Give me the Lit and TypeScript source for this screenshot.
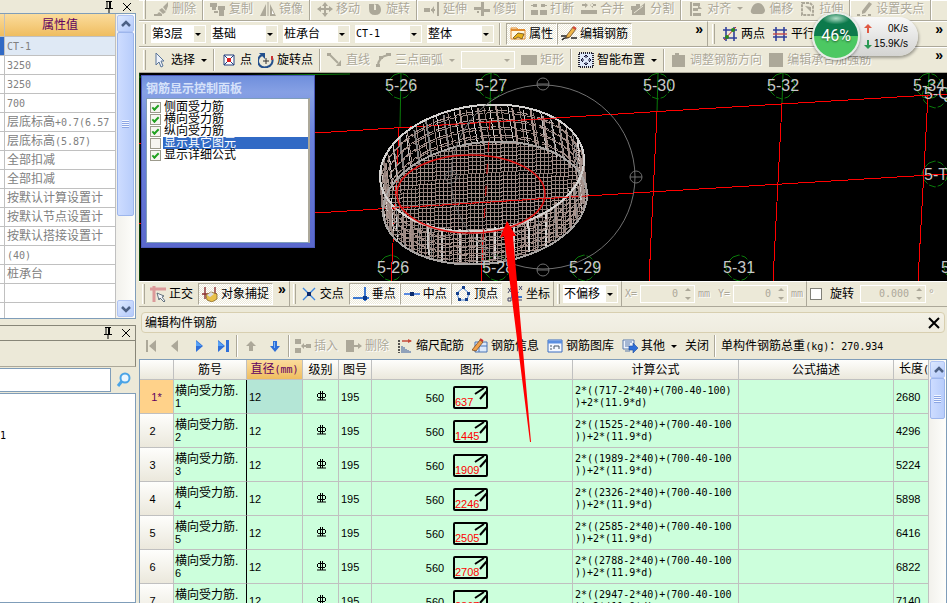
import { LitElement, html, svg, css, nothing } from "lit";
import { customElement } from "lit/decorators.js";
import { classMap } from "lit/directives/class-map.js";

const D = "#aca899";
const B = "#2f6fd8";

/* Icon artwork, each on a 16 x 16 grid. */
const icons: Record<string, unknown> = {
  erase: svg`<path d="M1 15q3-1 5-4l3 2q-3 2-8 2z M6 9l4 4 3-2-4-4z M10 6l5-5v4l-2 5z" fill=${D}/><path d="M1 14h8" stroke=${D} stroke-width="2"/>`,
  copy: svg`<path d="M0 2h7v4H0z M2 6h4v3H2z M8 5h7v4H8z M9 9h5v6H9z M4 10h4v2H4z" fill=${D}/>`,
  mirror: svg`<path d="M6 3v12H0z M10 3v12h6z" fill=${D}/><path d="M12 9v4h2z" fill="#fff"/><path d="M8 1v14" stroke=${D}/>`,
  move: svg`<path d="M8 1l3 4H9v2h3V5l4 3-4 3V9H9v3h2l-3 4-3-4h2V9H4v2L0 8l4-3v2h3V5H5z" fill=${D}/>`,
  rot: svg`<path d="M2 3h5v6h2V4L7 3h4q3 2 3 6 0 5-6 5-6 0-6-6z" fill=${D}/>`,
  extend: svg`<path d="M0 7h6v4H0z M7 8h4v2H7z M10 5v8l-3-4z M13 1h2v14h-2z" fill=${D}/>`,
  trim: svg`<path d="M7 1h3v14H7z M0 6h7v3H0z M10 8h6v3h-6z M3 10h2v2H3z" fill=${D}/>`,
  brk: svg`<path d="M0 9h7v5H0z M9 9h7v5H9z M2 3h4v3H2z M10 3h4v3h-4z M0 4h2v1H0z M14 4h2v1h-2z" fill=${D}/>`,
  merge: svg`<path d="M0 9h16v4H0z M1 3h5v2H1z M10 3h5v2h-5z M4 2l3 2-3 3z M12 2L9 4l3 3z" fill=${D}/>`,
  split: svg`<path d="M0 5h5V3h4v3l5-4v12H1V9H0z" fill=${D}/><path d="M3 12l9-7" stroke="#ece9d8"/>`,
  align: svg`<path d="M2 1h2v14H2z M5 2h7v3H5z M5 7h5v3H5z M5 12h8v3H5z M10 4l4 4h-4z" fill=${D}/>`,
  offset: svg`<path d="M1 9q2-7 7-7t7 7q0 3-3 4H3Q0 12 1 9z" fill=${D}/>`,
  stretch: svg`<path d="M2 2h8l3 3v9H2z" fill="none" stroke=${D} stroke-width="2" stroke-dasharray="3 1"/><path d="M5 5l6 6V6z" fill=${D}/>`,
  grips: svg`<path d="M5 10l7-9 3 2-7 9-3 1z M0 13h3v2H0z M5 14h4v1H5z M11 13h3v2h-3z" fill=${D}/>`,
  props: svg`<path d="M1 2h6l1 2h7v9H1z" fill="#fff7e0" stroke="#e08a2c"/><path d="M1 4h14" stroke="#e08a2c" stroke-width="2"/><path d="M3 12l5-5 6 1-2 5-4-2-3 2z" fill="#e8b21c" stroke="#6b4a12" stroke-width=".8"/>`,
  editbar: svg`<path d="M0 10h6M10 12h6M1 14c3-4 5-1 7-3" fill="none" stroke="#222" stroke-width="1.400"/><path d="M5 12l1-3 6-8 3 2-6 8z" fill="#f0b648" stroke="#6a4a28" stroke-width=".8"/><path d="M12 1l3 2" stroke="#d24a3a" stroke-width="2.400"/>`,
  twopt: svg`<path d="M4 1v14M12 1v14M1 4h14M1 12h14" stroke="#31409c" stroke-width="1.600"/><path d="M2 14L14 1" stroke="#c22"/><circle cx="5" cy="11" r="2" fill="#2a8a1c"/><circle cx="11" cy="4" r="2" fill="#2a8a1c"/>`,
  par: svg`<path d="M4 1v14M12 1v14M1 4h14M1 11h14" stroke="#31409c" stroke-width="1.600"/><path d="M1 8h14" stroke="#c44a4a" stroke-width="1.400"/>`,
  pick: svg`<path d="M4 1l8 8H9l2 5-2 1-2-5-3 3z" fill="#eef3fb" stroke="#5a7598"/>`,
  point: svg`<path d="M3 3h10v10H3z" fill="#fff" stroke="#24407e"/><path d="M3 3l10 10M13 3L3 13" stroke="#24407e"/><path d="M6 6h4v4H6z" fill="#d22"/>`,
  rotpt: svg`<path d="M4 3a6.500 6.500 0 0 0 5 12M9 15a6.500 6.500 0 0 0 5-9" fill="none" stroke="#23508c" stroke-width="2"/><path d="M1 1h6v6z" fill="#23508c"/><path d="M14 4v4" stroke="#c33" stroke-width="2"/><path d="M8 6v6M5 9h6" stroke="#333"/>`,
  line: svg`<path d="M2 2l9 9" stroke=${D} stroke-width="2"/><path d="M0 1h4v3H0z M9 14h5V8z" fill=${D}/>`,
  arc: svg`<path d="M2 14q0-9 10-11" fill="none" stroke=${D} stroke-width="2"/><path d="M0 12h4v3H0z M10 1h5v3h-5z M3 4h4v3H3z" fill=${D}/>`,
  rect: svg`<path d="M0 3h16v10H0z" fill=${D}/>`,
  smart: svg`<path d="M1 1h14v14H1z" fill="#dfe9fb" stroke="#223" stroke-width="2" stroke-dasharray="1 1"/><path d="M8 3v3M8 10v3M3 8h3M10 8h3M6 5l2-2 2 2M6 11l2 2 2-2M5 6L3 8l2 2M11 6l2 2-2 2" fill="none" stroke="#113"/>`,
  blk: svg`<path d="M1 3h3V1h4v2h6v12H1z" fill=${D}/>`,
  blk2: svg`<path d="M1 1h14v14H1z" fill=${D}/>`,
  ortho: svg`<path d="M0 3h16M4 0v16" stroke="#dc9a9a" stroke-width="3"/><path d="M7 7l7 3-2 1 3 4-1 1-4-4-1 2z" fill="#f4f6fa" stroke="#456" stroke-width=".8"/>`,
  snap: svg`<path d="M0 8h15M3 1v12M13 1v12" stroke="#8c3030" stroke-width="1.400"/><path d="M4 9l5-3 6 2v5l-5 3-5-2z" fill="#e8c04a" stroke="#86672a" stroke-width=".8"/><path d="M5 9l4-3 3 2-4 3z" fill="#d8dce4"/>`,
  inter: svg`<path d="M2 2l12 12M14 2L2 14" stroke="#3c86e0" stroke-width="1.400"/><path d="M6 6h4v4H6z" fill="#0a2a6c"/>`,
  perp: svg`<path d="M0 12h16M12 1v14" stroke="#3c78d0" stroke-width="2"/><path d="M10 10h4v4h-4z" fill="#0a3a8c"/>`,
  mid: svg`<path d="M0 8h16" stroke="#5a8ae0" stroke-width="2"/><path d="M6 6h4v4H6z" fill="#0a2a6c"/>`,
  vert: svg`<path d="M8 2l6 5-2 7H4L2 7z" fill="none" stroke="#4a86dc"/><path d="M7 0h3v3H7z M1 6h3v3H1z M12 6h3v3h-3z M3 12h3v3H3z M10 12h3v3h-3z" fill="#14408c"/>`,
  coord: svg`<path d="M5 5v6h10" fill="none" stroke="#3c78d0" stroke-width="2"/><path d="M6 10l6-4" stroke="#3c78d0"/><path d="M1 2l3 4M4 2L1 7M12 0l3 4M15 0l-3 4M1 12h3v3H1z M9 14h6" fill="none" stroke="#446"/>`,
  first: svg`<path d="M3 2h2v12H3z M13 2v12L6 8z" fill=${D}/>`,
  prev: svg`<path d="M11 2v12L4 8z" fill=${D}/>`,
  next: svg`<path d="M5 2v12l7-6z" fill=${B}/><path d="M5 3v5h6z" fill="#58a2f6"/>`,
  last: svg`<path d="M3 2v12l7-6z M11 2h3v12h-3z" fill=${B}/><path d="M3 3v5h6z" fill="#58a2f6"/>`,
  up: svg`<path d="M8 3l5 5h-3v5H6V8H3z" fill=${D}/>`,
  down: svg`<path d="M6 3h4v5h3l-5 6-5-6h3z" fill=${B}/><path d="M7 4h1v6H7z" fill="#7cb8fa"/>`,
  ins: svg`<path d="M0 1h6v5H0z M0 10h6v5H0z M11 6h5v4h-5z M8 7h3v2H8z M9 5v6L6 8z" fill=${D}/>`,
  del: svg`<path d="M0 2h8v12H0z M8 7h4v2H8z M12 5l4 3-4 3z" fill=${D}/>`,
  scale: svg`<path d="M2 2v13" stroke="#222" stroke-width="1.500" stroke-dasharray="2 1"/><path d="M5 3h9" stroke="#c64a3a" stroke-width="1.500"/><path d="M11 1l4 2-4 2z" fill="#c64a3a"/><path d="M5 8v7M7 9v6M9 11v4M11 12v3M13 13v2" stroke="#345a9c"/>`,
  info: svg`<path d="M3 4h12v10H3z" fill="#dce9fb" stroke="#4a74b4"/><path d="M7 14V8h8" fill="none" stroke="#4a74b4"/><path d="M0 12l8-10 3 2-7 9z" fill="#f0a04a" stroke="#7a4a20" stroke-width=".8"/><path d="M8 1l3 2" stroke="#c33" stroke-width="2"/>`,
  lib: svg`<path d="M1 2h14v12H1z" fill="#f4f8ff" stroke="#3a6cc0"/><path d="M1 4h14" stroke="#5a8ee0" stroke-width="3"/><path d="M3 8h2M3 11h2M7 11V8h5v3" fill="none" stroke="#456"/>`,
  other: svg`<path d="M1 2h11v9H1z" fill="#eef3fb" stroke="#5a7aac"/><path d="M3 4h7M3 6h5M3 8h4M3 13h5" stroke="#5a7aac"/><path d="M7 8h4V5l5 5-5 5v-3H7z" fill=${B} stroke="#1c4a9c" stroke-width=".6"/>`,
  search: svg`<circle cx="9" cy="6" r="4.500" fill="#eaf6ff" stroke="#4aa4e6" stroke-width="2"/><path d="M6 9l-4 5" stroke="#4aa4e6" stroke-width="3"/>`,
  pin: svg`<path d="M5 2.500h6M6 2v7M9.500 2v7M8.500 2v7M4 9.500h8M8 10v4" stroke="#000" fill="none"/>`,
  x: svg`<path d="M4 4l8 8M12 4l-8 8" stroke="#000"/>`,
  bigx: svg`<path d="M3 3l10 10M13 3L3 13" stroke="#000" stroke-width="2"/>`,
  cup: svg`<path d="M4 10l4-4 4 4" fill="none" stroke="#4d6185" stroke-width="2.500"/>`,
  cdn: svg`<path d="M4 6l4 4 4-4" fill="none" stroke="#4d6185" stroke-width="2.500"/>`,
};

const icon = (n: string) => svg`<svg class="ico" width="16" height="16" viewBox="0 0 16 16" aria-hidden="true">${icons[n]}</svg>`;

/* Half-width runs are set in the fixed-pitch face beside 12px Han text. */
const mix = (s: string) =>
  s.split(/([\x20-\x7e]+)/).filter(Boolean).map((p) => (/^[\x20-\x7e]/.test(p) ? html`<span class="m">${p}</span>` : p));

interface Opt { off?: boolean; on?: boolean; drop?: boolean }
const tool = (ic: string, label: string, o: Opt = {}) => html`<button
  class=${classMap({ tool: true, on: !!o.on })} ?disabled=${!!o.off}
  aria-pressed=${o.on ? "true" : nothing}>${ic ? icon(ic) : nothing}<span>${label}</span>${o.drop ? html`<i class="caret"></i>` : nothing}</button>`;
const iconBtn = (ic: string, label: string, off = false) =>
  html`<button class="tool" aria-label=${label} ?disabled=${off}>${icon(ic)}</button>`;
const sep = html`<i class="sep"></i>`;
const grip = html`<i class="grip"></i>`;
const more = html`<button class="more" aria-label="更多">»</button>`;
const combo = (v: string, label: string, extra = "") =>
  html`<span class="combo ${extra}"><select aria-label=${label} ?disabled=${!v}><option>${v}</option></select><i class="caret"></i></span>`;
const spin = (id: string, v: string) =>
  html`<span class="spin"><input id=${id} type="text" value=${v} disabled /><i class="ud"></i></span>`;

const shared = css`
  button { font: inherit; color: inherit; border: 0; background: none; padding: 0; margin: 0; }
  .ico { display: block; flex: none; }
  .m { font-family: "DejaVu Sans Mono", monospace; font-size: 10px; }
`;

@customElement("cad-viewport")
export class CadViewport extends LitElement {
  static styles = [shared, css`
    :host { display: block; position: relative; height: 208px; background: #000; overflow: hidden; font: 12px/12px "Liberation Sans", "Noto Sans CJK SC", sans-serif; }
    .scene { display: block; width: 100%; height: 208px; }
    .tag { font: 16px "Liberation Sans", sans-serif; fill: #c8c8c8; }
    .palette { position: absolute; left: 2px; top: 2px; width: 174px; height: 173px; box-sizing: border-box; padding: 4px; display: flex; flex-direction: column;
      background: linear-gradient(#6f8fdc, #86a0e4 16px, #6b82dc 60px, #5a68cc); border: 1px solid #4a58b8; }
    h2 { margin: 0; padding: 0; font: bold 12px/18px "Liberation Sans", "Noto Sans CJK SC", sans-serif; color: #d6e2fa; }
    ul { flex: 1; margin: 0; padding: 2px 0 2px 3px; list-style: none; background: #fff; border: 1px solid #7f9db9; border-right: 2px solid #aca899; }
    li { display: flex; align-items: center; height: 12px; gap: 2px; }
    li input { appearance: none; flex: none; width: 11px; height: 11px; margin: 0; border: 1px solid #9c9a8c; background: #f6f5f0; display: grid; place-items: center; }
    li input:checked::before { content: ""; width: 5px; height: 2px; border-left: 2px solid #21a121; border-bottom: 2px solid #21a121; transform: rotate(-45deg); }
    li label { flex: 1; padding-left: 1px; color: #000; white-space: nowrap; }
    li.sel label { background: #316ac5; color: #fff; }
  `];

  private rods() {
    const out: unknown[] = [];
    const tones = ["#a8948e", "#d8d4d2", "#9a8882", "#808080", "#a8948e", "#c8c4c2", "#8c7c77"];
    const top = (t: number, k = 1) => [482 + 102 * k * Math.cos(t), 168 - 8 * k * Math.cos(t) + 63 * k * Math.sin(t)];
    const bot = (t: number, k = 1) => [485 + 102 * k * Math.cos(t), 203 - 8 * k * Math.cos(t) + 61 * k * Math.sin(t)];
    const n = 105;
    for (let i = 0; i < n; i++) {
      const t = (i / n) * Math.PI * 2;
      const k = i % 2 ? 1 : 0.96;
      const [a, b] = top(t, k);
      const [c, d] = bot(t + 0.03, k);
      out.push(svg`<path d="M${a} ${b}L${c} ${d}" stroke=${tones[(i * 5 + (i % 4)) % 7]} stroke-width=${i % 3 === 0 ? 2 : 1}/>`);
    }
    const ring = (h: number, k: number) => {
      let p = "";
      for (let i = 0; i <= 72; i++) {
        const t = (i / 72) * Math.PI * 2;
        const [a, b] = top(t, k);
        const [c, d] = bot(t, k);
        p += `${i ? "L" : "M"}${a + (c - a) * h} ${b + (d - b) * h}`;
      }
      return p;
    };
    for (let j = 1; j < 9; j++) out.push(svg`<path d=${ring(j / 9, j % 2 ? 0.97 : 1)} stroke=${j % 2 ? "#a8948e" : "#9a8680"} stroke-dasharray=${j % 2 ? "11 2 5 3" : "7 3 14 2"}/>`);
    out.push(svg`<path d=${ring(1, 1)} stroke="#a8a4a2" stroke-width="2"/><path d=${ring(0, 1)} stroke="#d4d2d0" stroke-width="2"/>`);
    return out;
  }

  private mesh() {
    const out: unknown[] = [];
    for (let x = -102, i = 0; x <= 102; x += 4, i++) {
      const h = 60 * Math.sqrt(Math.max(0, 1 - (x / 102) ** 2));
      const cy = 203 - x * 0.08;
      out.push(svg`<path d="M${487 + x} ${cy - h}L${483 + x} ${cy + h}" stroke=${i % 3 ? "#93817c" : "#a8948e"}/>`);
    }
    for (let y = -58, i = 0; y <= 58; y += 4, i++) {
      const w = 101 * Math.sqrt(1 - (y / 61) ** 2);
      out.push(svg`<path d="M${485 - w} ${203 + y + w * 0.06}L${485 + w} ${203 + y - w * 0.06}" stroke=${i % 3 ? "#93817c" : "#a8948e"}/>`);
    }
    return out;
  }

  render() {
    const bubbles = [[400, 86], [491, 86], [658, 86], [782, 86], [929, 86], [935, 95], [935, 174], [391, 268], [497, 268], [584, 268], [739, 268], [957, 268]];
    const tags: [string, number, number][] = [["5-26", 385, 91], ["5-27", 475, 91], ["5-30", 643, 91], ["5-32", 767, 91], ["5-34", 913, 91], ["5-Q", 924, 99], ["5-T", 924, 180], ["5-26", 377, 273], ["5-28", 482, 273], ["5-29", 569, 273], ["5-31", 723, 273], ["5-33", 941, 273]];
    const items: [string, boolean][] = [["侧面受力筋", true], ["横向受力筋", true], ["纵向受力筋", true], ["显示其它图元", false], ["显示详细公式", true]];
    return html`
      <svg class="scene" role="img" aria-label="桩承台三维视图">
        <g transform="translate(-139 -73)" fill="none">
          <g stroke="#0a7a0a">
            <path d="M139 77L350 74M401 73L400 128M491 73L490 108M658 73L657 112M783 73L782 103M929 73L928 95M139 73v208"/>
            ${bubbles.map(([x, y]) => svg`<path d="M${x - 6} ${y - 11}l6-2 6 2 5 5 2 6-2 6-5 5-6 2-6-2-5-5-2-6 2-6z" stroke-dasharray="7 2"/>`)}
          </g>
          <g stroke="#f00" shape-rendering="crispEdges">
            <path d="M139 144L650 112L947 94M139 224L650 192L947 174"/>
            <path d="M399 128L391 281M657 112L649 281M782 103L773 281M928 95L918 281M483 240L481 281"/>
          </g>
          <g shape-rendering="crispEdges">${this.mesh()}</g>
          <g shape-rendering="crispEdges">${this.rods()}</g>
          <g stroke="#707070"><circle cx="543" cy="177" r="92"/><circle cx="543" cy="84" r="6"/><circle cx="636" cy="177" r="6"/><circle cx="543" cy="270" r="6"/><circle cx="451" cy="177" r="6"/><path d="M537 84h12M630 177h12M537 270h12"/></g>
          <g stroke="#e01010">
            <ellipse cx="471" cy="194" rx="74" ry="39" stroke-width="1.500"/>
            <path d="M392 208L588 196M440 125L560 118" stroke-dasharray="7 3"/>
            <path d="M398 150L396 172M490 120L483 240" stroke-dasharray="10 12"/>
          </g>
          ${tags.map(([s, x, y]) => svg`<text class="tag" x=${x} y=${y}>${s}</text>`)}
        </g>
      </svg>
      <section class="palette">
        <h2>钢筋显示控制面板</h2>
        <ul>${items.map(([s, c], i) => html`<li class=${c ? "" : "sel"}><input type="checkbox" id="show${i}" .checked=${c} /><label for="show${i}">${s}</label></li>`)}</ul>
      </section>`;
  }
}

@customElement("app-root")
export class AppRoot extends LitElement {
  static styles = [shared, css`
    :host { display: grid; grid-template-columns: 139px minmax(0, 1fr); height: 100vh; overflow: hidden; position: relative; background: #ece9d8; color: #000;
      font: 12px/14px "Liberation Sans", "Noto Sans CJK SC", sans-serif; }
    * { box-sizing: border-box; }
    i { display: block; font-style: normal; }

    .side { display: grid; grid-template-rows: 13px 306px 6px 16px 26px 26px minmax(0, 1fr); margin-right: 3px; min-height: 0; }
    .cap { display: flex; justify-content: flex-end; align-items: center; gap: 2px; padding-right: 1px; overflow: hidden; }
    .cap.low { border: 1px solid #888678; border-left: 0; }
    .props { display: grid; grid-template-columns: minmax(0, 1fr) 19px; background: #fff; border: 1px solid #7f9db9; border-left: 0; overflow: hidden; }
    .props table { width: 100%; height: 0; border-collapse: separate; border-spacing: 0; table-layout: fixed; }
    .props th { height: 23px; padding: 0; font-weight: normal; color: #600060; background: linear-gradient(#fbdc9c, #efbd60); border-right: 1px solid #c0c0c0; border-bottom: 1px solid #c0c0c0; }
    .props td { height: 19px; padding: 0 0 0 2px; color: #808080; border-right: 1px solid #c0c0c0; border-bottom: 1px solid #c0c0c0; white-space: nowrap; overflow: hidden; }
    .props .edge { width: 5px; padding: 0; background: #fff; }
    .props tr.cur td { background: #dfe9f5; }
    .props tr.cur .edge { background: #316ac5; }
    .sb { display: flex; flex-direction: column; background: linear-gradient(90deg, #f2f1ec, #fefefb); padding: 1px; overflow: hidden; }
    .sb button { flex: none; width: 100%; height: 17px; display: grid; place-items: center; border-radius: 2px; border: 1px solid #b0c4f4; background: linear-gradient(135deg, #dce8ff, #b4cafa); overflow: hidden; }
    .thumb { flex: none; height: 184px; border-radius: 2px; border: 1px solid #9db6ec; background: linear-gradient(90deg, #cddcff, #b8cdfb); display: grid; place-items: center; }
    .thumb::before { content: ""; width: 7px; height: 8px; background: repeating-linear-gradient(#f2f6ff 0 1px, #8ca6e4 1px 2px); }
    .sb .end { margin-top: auto; }
    .thumb.short { height: 41px; }
    .find { display: grid; grid-template-columns: minmax(0, 1fr) 25px; padding: 1px 0; }
    .find input { min-width: 0; margin: 0; border: 1px solid #7f9db9; border-left: 0; background: #fff; }
    .find button { display: grid; place-items: center; }
    .strip { border-right: 1px solid #888678; border-bottom: 1px solid #aca899; }
    .tree { background: #fff; border: 1px solid #7f9db9; border-left: 0; padding-top: 34px; overflow: hidden; }

    .main { display: flex; flex-direction: column; min-width: 0; min-height: 0; }
    .row { flex: none; display: flex; height: 26px; border-bottom: 1px solid #aca899; white-space: nowrap; overflow: hidden; }
    .row.top { height: 21px; padding-bottom: 4px; }
    .top .sep { margin: 0 -1px; }
    .band { flex: none; display: flex; align-items: center; gap: 7px; padding: 0 4px; border-top: 1px solid #fff; }
    .band + .band { border-left: 1px solid #aca899; }
    .band.grow { flex: 1; min-width: 0; }
    .band.two { width: 240px; }
    .band.draw { gap: 6px; }
    .snug { gap: 5px; }
    .stat .band { padding: 0 3px; }
    .tool { flex: none; display: flex; align-items: center; gap: 3px; height: 20px; }
    .tool:disabled { color: #aca899; text-shadow: 1px 1px #fff; }
    .tool.on { height: 22px; padding: 0 3px; border: 1px solid #aca899; border-right-color: #fff; border-bottom-color: #fff; background: repeating-conic-gradient(#fff 0 25%, #ece9d8 0 50%) 0 0 / 2px 2px; }
    .on + .on { margin-left: -5px; }
    .grip { flex: none; width: 3px; height: 20px; border-left: 1px solid #fff; border-right: 1px solid #aca899; }
    .sep { flex: none; width: 2px; height: 22px; border-left: 1px solid #aca899; border-right: 1px solid #fff; }
    .caret { flex: none; width: 0; height: 0; border: 3px solid transparent; border-top-color: currentColor; border-bottom: 0; margin-left: 3px; }
    .more { margin-left: auto; align-self: flex-start; font: bold 14px/14px "Liberation Sans", sans-serif; }
    .combo { flex: none; display: grid; grid-template-columns: minmax(0, 1fr) 10px; align-items: center; width: 67px; height: 18px; background: linear-gradient(90deg, #fff calc(100% - 11px), #ece9d8 0); border: 1px solid #fff; }
    .combo.thin { width: 55px; }
    .combo.dis { background: none; width: 54px; color: #aca899; }
    .combo .caret { margin: 0; }
    select { appearance: none; width: 100%; height: 16px; margin: 0; padding: 0; border: 0; background: none; font: 12px/16px "Liberation Sans", "Noto Sans CJK SC", sans-serif; color: #000; }
    .code select { font: 10px/16px "DejaVu Sans Mono", monospace; }
    .spin { flex: none; display: flex; align-items: center; width: 55px; height: 18px; border: 1px solid #fff; padding-right: 3px; }
    .rotate .spin { width: 66px; margin-left: 3px; }
    .spin input { flex: 1; min-width: 0; width: 100%; margin: 0; border: 0; padding: 0 7px 0 0; background: none; text-align: right; color: #aca899; font: 10px/16px "DejaVu Sans Mono", monospace; }
    .ud { flex: none; width: 6px; height: 12px; background: linear-gradient(#aca899 3px, #ece9d8 3px 9px, #aca899 9px); clip-path: polygon(50% 0, 100% 3px, 100% 9px, 50% 100%, 0 9px, 0 3px); }
    .dim { color: #aca899; text-shadow: 1px 1px #fff; }
    .fields { gap: 3px; }
    .fields .pad { margin-left: 5px; }
    .tick { appearance: none; flex: none; width: 12px; height: 12px; margin: 0 5px 0 0; border: 1px solid #808078; background: #fff; }

    .title { flex: none; display: flex; align-items: center; justify-content: space-between; height: 21px; margin: 5px 2px 0; padding: 0 2px 0 3px; background: linear-gradient(#f3f1e7, #efecdf); border: 1px solid #d8cfb0; border-radius: 4px; }
    h1 { margin: 0; font: inherit; }
    .edit { height: 26px; border: 0; }
    .edit .band { border: 0; }
    .nav { gap: 8px; }
    .nav .sep { margin: 0 -3px; }

    .grid { flex: 1; min-height: 0; display: grid; grid-template-columns: minmax(0, 1fr) 17px; border: 1px solid #7f9db9; border-bottom: 0; background: #fff; overflow: hidden; }
    .clip { overflow: hidden; }
    .grid table { width: 100%; border-collapse: separate; border-spacing: 0; table-layout: fixed; }
    .grid th { height: 20px; padding: 0; font-weight: normal; white-space: nowrap; overflow: hidden; background: linear-gradient(#fefefc, #ebe8dc); border-right: 1px solid #c0c0c0; border-bottom: 1px solid #c0c0c0; }
    .grid th.hot { background: linear-gradient(#fbdc9c, #efbd60); color: #600060; }
    .grid td { height: 34px; padding: 0 2px; line-height: 12px; background: #ccffdc; border-right: 1px solid #c0c0c0; border-bottom: 1px solid #c0c0c0; overflow: hidden; }
    .grid tbody th { background: linear-gradient(#fefefc, #ebe8dc); height: 34px; padding: 0 8px 0 0; }
    .grid tbody tr.cur th { background: #ffd28a; color: #600060; padding: 0; }
    .grid tr.cur td.dia { background: #b4e6d6; }
    .grid td.name { padding: 0 0 0 1px; border-right-color: #000; }
    .grid thead th:last-child { text-align: left; padding-left: 5px; }
    .n { font: 11px/12px "Liberation Sans", sans-serif; }
    .mid { text-align: center; }
    .shape { display: flex; justify-content: center; align-items: center; gap: 9px; padding: 2px 29px 0 0; }
    .fig { display: block; }
    .fig text { font: 11px "Liberation Sans", sans-serif; fill: #f00; }
    .c0 { width: 34px; } .c1 { width: 73px; } .c2 { width: 56px; } .c3 { width: 36px; } .c4 { width: 33px; } .c5 { width: 201px; } .c6 { width: 166px; } .c8 { width: 35px; }

    .arrow { position: absolute; left: 0; top: 0; width: 100%; height: 100%; pointer-events: none; }
    .net { position: absolute; left: 812px; top: 12px; display: flex; align-items: center; }
    .ball { width: 48px; height: 48px; border-radius: 50%; border: 2px solid #e8ece8; box-shadow: 0 1px 3px #0006; background: radial-gradient(ellipse 14px 6px at 50% 10%, #d8f4e4cc, transparent), linear-gradient(#0c7a4c 50%, #4cc862 50%); color: #fff; font: 16px/44px Roboto, sans-serif; text-align: center; text-shadow: 0 1px 2px #0008; z-index: 1; }
    .pill { display: grid; grid-template-columns: 10px 34px; gap: 1px; align-content: center; width: 86px; height: 39px; margin-left: -28px; padding-left: 31px; border-radius: 0 20px 20px 0; background: linear-gradient(#f8f8f8, #d4d4d2); box-shadow: 1px 2px 3px #0005; font: 10px/14px "Liberation Sans", sans-serif; text-align: right; }
    .pill svg { display: block; margin: 2px 0; }
  `];

  render() {
    const vals = ["CT-1", "3250", "3250", "700", "层底标高+0.7(6.57", "层底标高(5.87)", "全部扣减", "全部扣减", "按默认计算设置计", "按默认节点设置计", "按默认搭接设置计", "(40)", "桩承台", "", ""];
    const bars: [number, number][] = [[717, 2680], [1525, 4296], [1989, 5224], [2326, 5898], [2585, 6416], [2788, 6822], [2947, 7140]];
    const width = [637, 1445, 1909, 2246, 2505, 2708, 2867];
    const off = { off: true };
    const on = { on: true };
    return html`
      <aside class="side">
        <div class="cap">${icon("pin")}${icon("x")}</div>
        <div class="props">
          <div class="clip"><table>
            <colgroup><col class="edge" /><col /></colgroup>
            <thead><tr><th></th><th scope="col">属性值</th></tr></thead>
            <tbody>${vals.map((v, i) => html`<tr class=${i ? "" : "cur"}><td class="edge"></td><td>${mix(v)}</td></tr>`)}</tbody>
          </table></div>
          <div class="sb"><button aria-label="向上">${icon("cup")}</button><i class="thumb"></i><button class="end" aria-label="向下">${icon("cdn")}</button></div>
        </div>
        <i></i>
        <div class="cap low">${icon("pin")}${icon("x")}</div>
        <div class="strip"></div>
        <div class="find"><input type="text" aria-label="搜索" /><button aria-label="查找">${icon("search")}</button></div>
        <div class="tree"><span class="m">1</span></div>
      </aside>

      <main class="main">
        <div class="row top"><div class="band grow">
          ${grip}${tool("erase", "删除", off)}${sep}${tool("copy", "复制", off)}${tool("mirror", "镜像", off)}${sep}
          ${tool("move", "移动", off)}${tool("rot", "旋转", off)}${sep}${tool("extend", "延伸", off)}${tool("trim", "修剪", off)}${sep}
          ${tool("brk", "打断", off)}${tool("merge", "合并", off)}${tool("split", "分割", off)}${sep}
          ${tool("align", "对齐", { off: true, drop: true })}${tool("offset", "偏移", off)}${tool("stretch", "拉伸", off)}${sep}${tool("grips", "设置夹点", off)}${sep}
        </div></div>
        <div class="row">
          <div class="band snug grow">
            ${grip}${combo("第3层", "楼层", "thin")}${combo("基础", "类型")}${combo("桩承台", "构件类型")}${combo("CT-1", "构件", "code")}${combo("整体", "单元")}${sep}
            ${tool("props", "属性", on)}${tool("editbar", "编辑钢筋", on)}${more}
          </div>
          <div class="band two">${grip}${tool("twopt", "两点")}${tool("par", "平行")}${more}</div>
        </div>
        <div class="row"><div class="band draw grow">
          ${grip}${tool("pick", "选择", { drop: true })}${sep}${tool("point", "点")}${tool("rotpt", "旋转点")}${sep}
          ${tool("line", "直线", off)}${tool("arc", "三点画弧", { off: true, drop: true })}${combo("", "参数", "dis")}${tool("rect", "矩形", off)}${sep}
          ${tool("smart", "智能布置", { drop: true })}${sep}${tool("blk", "调整钢筋方向", off)}${tool("blk2", "编辑承台加强筋", off)}${more}
        </div></div>

        <cad-viewport></cad-viewport>

        <div class="row stat">
          <div class="band snug">${grip}${tool("ortho", "正交")}${tool("snap", "对象捕捉", on)}${more}</div>
          <div class="band snug">${grip}${tool("inter", "交点")}${tool("perp", "垂点", on)}${tool("mid", "中点", on)}${tool("vert", "顶点", on)}${tool("coord", "坐标")}</div>
          <div class="band fields">${grip}${combo("不偏移", "偏移方式", "thin")}</div>
          <div class="band fields">
            <label class="m dim" for="dx">X=</label>${spin("dx", "0")}<span class="m dim">mm</span>
            <label class="m dim pad" for="dy">Y=</label>${spin("dy", "0")}<span class="m dim">mm</span>
          </div>
          <div class="band fields grow rotate"><input class="tick" type="checkbox" id="rot" /><label for="rot">旋转</label>
            ${spin("deg", "0.000")}<label class="dim" for="deg">°</label></div>
        </div>

        <div class="title"><h1>编辑构件钢筋</h1><button aria-label="关闭">${icon("bigx")}</button></div>
        <div class="row edit"><div class="band nav grow">
          ${iconBtn("first", "第一条", true)}${iconBtn("prev", "上一条", true)}${iconBtn("next", "下一条")}${iconBtn("last", "最后一条")}${sep}
          ${iconBtn("up", "上移", true)}${iconBtn("down", "下移")}${sep}
          ${tool("ins", "插入", off)}${tool("del", "删除", off)}${tool("scale", "缩尺配筋")}${tool("info", "钢筋信息")}${tool("lib", "钢筋图库")}${tool("other", "其他", { drop: true })}${tool("", "关闭")}${sep}
          <span>${mix("单构件钢筋总重(kg)：270.934")}</span>
        </div></div>
        <div class="grid">
          <div class="clip"><table>
            <colgroup><col class="c0" /><col class="c1" /><col class="c2" /><col class="c3" /><col class="c4" /><col class="c5" /><col class="c6" /><col /><col class="c8" /></colgroup>
            <thead><tr><th></th><th scope="col">筋号</th><th scope="col" class="hot">${mix("直径(mm)")}</th><th scope="col">级别</th><th scope="col">图号</th><th scope="col">图形</th><th scope="col">计算公式</th><th scope="col">公式描述</th><th scope="col">${mix("长度(mm)")}</th></tr></thead>
            <tbody>${bars.map(([b, len], i) => html`<tr class=${i ? "" : "cur"}>
              <th scope="row" class="n">${i + 1}${i ? "" : "*"}</th>
              <td class="name">横向受力筋.<br /><span class="n">${i + 1}</span></td>
              <td class="dia n">12</td>
              <td class="mid">${svg`<svg width="10" height="10" viewBox="0 0 10 10" role="img" aria-label="三级"><path d="M4.500 0v9M6.500 0v9M2 2.500h7M2 6.500h7M1.500 3v3M9.500 3v3M1 9h9" fill="none" stroke="#000"/></svg>`}</td>
              <td class="n">195</td>
              <td><div class="shape"><span class="n">560</span>${svg`<svg class="fig" width="36" height="24" viewBox="0 0 36 24"><rect x="1" y="1" width="33" height="21" rx="1" fill="none" stroke="#000" stroke-width="2"/><path d="M22 8l9-6M27 13l7-8" stroke="#000" stroke-width="2"/><text x="2" y="20">${width[i]}</text></svg>`}</div></td>
              <td class="m">2*((${b}-2*40)+(700-40-100${i ? "" : ")"}<br />${i ? "))" : ")"}+2*(11.9*d)</td>
              <td></td>
              <td class="n">${len}</td></tr>`)}</tbody>
          </table></div>
          <div class="sb"><button aria-label="向上">${icon("cup")}</button><i class="thumb short"></i></div>
        </div>
      </main>

      <div class="net"><div class="ball">46%</div>
        <div class="pill">
          <svg width="10" height="10" viewBox="0 0 10 10"><path d="M5 0l4 4H6v5H4V4H1z" fill="#e05a44"/></svg><span>0K/s</span>
          <svg width="10" height="10" viewBox="0 0 10 10"><path d="M5 10l4-4H6V1H4v5H1z" fill="#2c9a54"/></svg><span>15.9K/s</span>
        </div></div>
      <svg class="arrow" aria-hidden="true"><path d="M507 221L500 238L504 236L530 442H531L513 236L516 236Z" fill="#f00"/></svg>`;
  }
}
